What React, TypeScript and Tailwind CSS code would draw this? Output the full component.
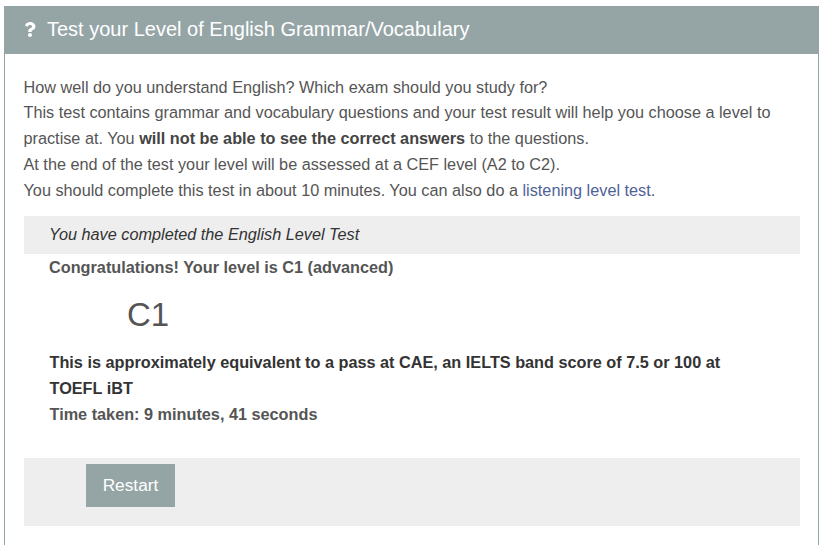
import React from 'react';
import { FaQuestion } from 'react-icons/fa';

export default function App() {
    return (
        <div className="h-[545px] overflow-hidden bg-white pt-[6px] pl-[4px] font-['Liberation_Sans',Arial,sans-serif] text-[16.25px] leading-[25.8px] text-[#555]">
            <div className="w-[815px] h-[539px] border-x border-[#95a5a6]">
                <div className="-mx-px h-[48px] bg-[#95a5a6] flex items-center pl-[20px] text-white">
                    <FaQuestion className="w-[12px] h-[15px] mr-[11px] mb-[1px]" />
                    <h2 className="text-[20px] leading-[28px] mb-[2px]">Test your Level of English Grammar/Vocabulary</h2>
                </div>
                <div className="pt-[20px] pl-[19px] pr-[18px]">
                    <p className="mb-[12px] -ml-[0.5px] pt-[0.6px] h-[130px]">
                        How well do you understand English? Which exam should you study for?<br />
                        This test contains grammar and vocabulary questions and your test result will help you choose a level to<br />
                        practise at. You <b className="text-[#444]">will not be able to see the correct answers</b> to the questions.<br />
                        At the end of the test your level will be assessed at a CEF level (A2 to C2).<br />
                        You should complete this test in about 10 minutes. You can also do a <a href="#" className="text-[#4f6298]">listening level test</a>.
                    </p>
                    <div className="h-[38px] bg-[#eee] pl-[25px] flex items-center italic text-[#333]">You have completed the English Level Test</div>
                    <p className="mt-[1px] pl-[25px] font-bold">Congratulations! Your level is C1 (advanced)</p>
                    <div className="mt-[12px] pl-[103px] text-[33px] leading-[44px] text-[#555]">C1</div>
                    <div className="mt-[13.4px] pl-[25.5px] pr-[60px] font-bold">
                        <p className="text-[#333]">This is approximately equivalent to a pass at CAE, an IELTS band score of 7.5 or 100 at<br />TOEFL iBT</p>
                        <p>Time taken: 9 minutes, 41 seconds</p>
                    </div>
                    <div className="mt-[30.6px] h-[68px] bg-[#eee] pt-[6px] pl-[62px]">
                        <button className="w-[89px] h-[43px] bg-[#95a5a6] text-white text-[17.3px]">Restart</button>
                    </div>
                </div>
            </div>
        </div>
    );
}
